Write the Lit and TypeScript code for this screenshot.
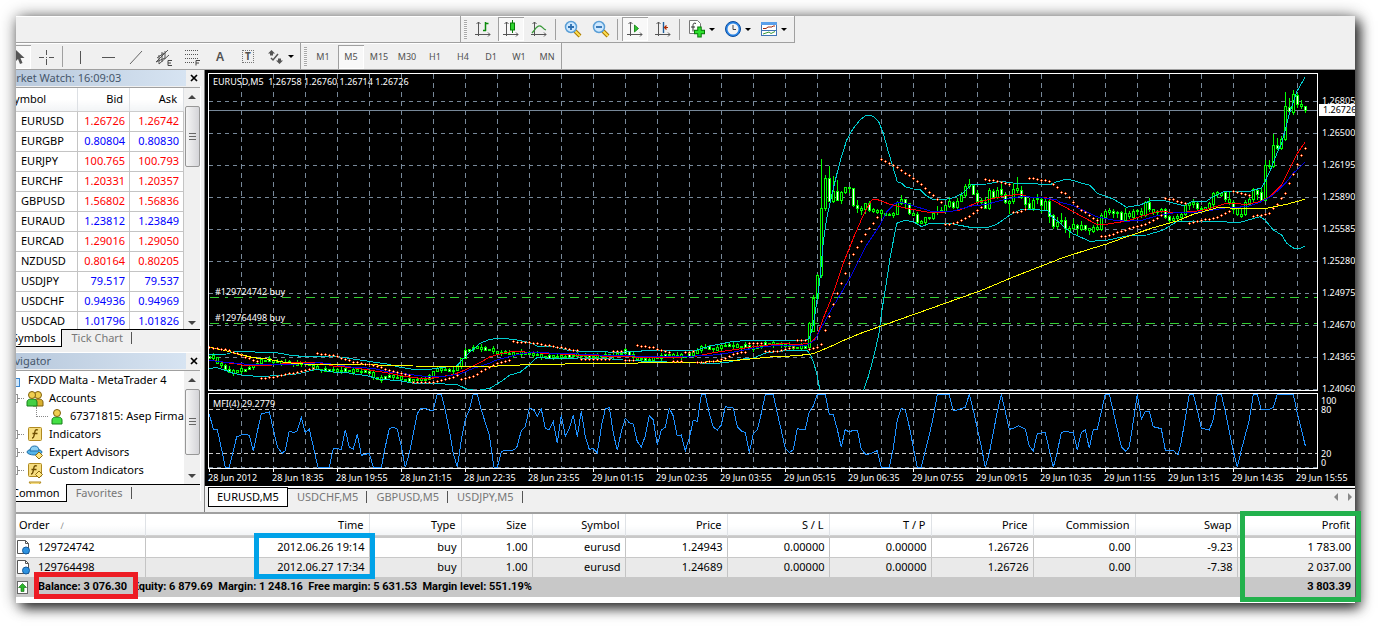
import { LitElement, html, svg, css } from "lit";
import { customElement } from "lit/decorators.js";
import { classMap } from "lit/directives/class-map.js";

type Pt = [number, number];

/* Curves are sampled three units to the pixel, in tiles with their own origin. */
const tile = (ox: number, oy: number, data: string): Pt[] =>
  data
    .trim()
    .split(/\s+/)
    .map((p) => {
      const [x, y] = p.split(",").map(Number);
      return [ox + x / 3, oy + y / 3] as Pt;
    });

const line = (...parts: Pt[][]): string =>
  parts.flat().map(([x, y]) => `${x.toFixed(1)},${y.toFixed(1)}`).join(" ");

const A = (d: string) => tile(200, 330, d);
const B = (d: string) => tile(580, 330, d);
const C = (d: string) => tile(960, 330, d);
const D = (d: string) => tile(780, 65, d);
const E = (d: string) => tile(1060, 65, d);

const UPPER = line(
  A("28,73 80,72 100,66 124,64 180,67 230,68 280,77 330,80 420,81 460,87 520,96 560,102 600,112 640,118 690,118 730,112 770,108 800,75 820,58 840,40 870,28 900,25 940,28 990,38 1010,48 1060,50 1100,60 1138,64"),
  B("0,64 120,67 200,62 330,62 350,60 390,48 450,36 500,31 590,33"),
  D("0,827 70,828 88,820 100,780 112,700 120,640 130,530 140,460 160,370 180,290 200,225 220,190 240,165 256,153 268,151 280,154 296,170 310,205 325,260 340,310 352,350 365,355 376,365 400,372 420,373 440,393 455,402 490,404 520,398 545,387 575,358 620,357 660,349 700,354 740,355 810,359 830,350"),
  E("0,348 16,343 40,346 70,356 90,361 112,385 160,402 200,427 240,420 270,408 310,406 370,422 400,408 440,408 460,395 490,380 570,379 605,368 615,350 630,318 655,255 665,235 690,140 710,80 735,37"),
);
const LOWER_1 = line(
  A("28,115 50,113 80,122 100,130 130,136 190,140 230,136 280,134 320,125 345,118 400,126 440,128 500,137 540,148 600,152 640,160 700,161 770,163 800,177 830,182 870,175 910,150 930,135 960,127 985,107 1010,83 1060,85 1138,84"),
  B("0,84 60,84 130,90 220,95 300,97 350,98 380,101 440,98 480,88 520,84 560,68 640,60 680,60 690,72 700,95 710,130 720,182"),
);
const LOWER_2 = line(
  D("250,977 265,935 280,880 296,810 305,740 318,660 330,580 350,475 375,466 400,470 425,485 450,475 520,477 570,487 625,487 650,478 690,450 720,435 760,433 805,438 820,460"),
  E("0,473 16,490 40,507 90,529 140,526 200,513 260,510 310,495 350,470 400,468 460,470 540,472 600,455 615,465 640,495 665,510 680,535 705,552 720,550 735,544"),
);
const FAST = line(
  A("28,90 60,95 110,102 140,108 200,107 260,100 300,96 350,97 400,108 460,113 520,122 560,128 620,140 680,147 710,142 760,134 800,118 840,98 870,80 900,72 940,63 1000,68 1080,72 1138,76"),
  B("0,76 130,80 230,83 340,80 400,68 470,58 550,46 598,43"),
  D("0,836 60,838 90,835 110,815 130,760 150,710 170,655 190,595 220,520 250,450 275,405 290,403 330,418 380,430 440,441 480,443 540,435 590,413 640,400 680,392 720,388 750,396 800,398 830,412"),
  E("0,418 40,440 80,462 110,478 145,477 200,468 250,452 300,438 340,443 400,440 440,433 500,415 560,418 600,410 630,395 665,360 690,310 710,268 735,232"),
);
const SLOW = line(
  A("28,91 60,95 110,100 160,105 200,103 280,103 360,98 400,103 460,112 520,115 560,125 620,132 680,140 740,138 780,132 820,115 860,103 890,90 920,82 960,72 1000,66 1060,70 1138,72"),
  B("0,73 80,76 200,79 330,79 400,75 450,68 520,55 598,45"),
  D("0,840 80,840 105,825 120,795 150,740 180,690 220,620 260,540 300,480 320,440 345,415 360,412 400,422 450,438 520,438 570,424 620,418 680,402 720,395 780,397 830,405"),
  E("0,412 40,422 110,455 160,465 200,469 250,465 290,452 340,444 400,443 460,435 500,428 560,425 600,412 640,390 680,350 700,325 735,292"),
);
const TREND = line(
  A("28,52 60,58 100,68 160,83 200,87 260,98 310,102 400,103 500,104 640,108 800,109 860,110 920,106 1000,104 1080,103 1130,100"),
  B("0,100 150,100 230,97 340,98 480,90 560,82 598,79"),
  D("0,875 60,871 100,866 150,845 200,822 250,802 310,781 360,763 420,742 500,713 600,678 700,636 800,597 830,586"),
  E("0,581 80,555 140,537 200,515 280,488 350,468 400,448 480,426 520,430 620,430 680,418 735,403"),
);
const MFI = line(
  A("28,252 40,298 52,298 60,335 76,412 88,412 98,370 110,320 130,313 148,316 160,363 172,305 184,252 208,246 218,290 232,350 246,370 256,362 268,303 280,308 292,302 304,262 316,308 328,298 340,350 354,412 388,412 400,355 424,358 436,300 448,352 460,357 472,312 484,376 508,370 520,412 544,412 556,350 568,296 580,292 592,298 604,350 616,412 628,370 652,250 664,235 676,235 688,240 700,240 712,193 724,193 736,240 748,300 760,370 772,412 784,330 796,268 808,240 820,193 832,193 844,240 868,315 882,412 892,412 904,365 916,361 940,360 950,353 964,302 976,290 988,235 1000,238 1012,258 1024,237 1036,296 1048,298 1060,275 1072,340 1084,255 1096,318 1108,296 1120,255 1132,320 1144,243"),
  B("16,320 28,358 40,356 52,368 66,280 76,237 88,232 100,310 112,360 124,305 136,265 148,278 160,282 172,335 184,350 196,318 208,258 220,270 232,345 244,300 256,292 268,235 280,258 292,318 304,315 316,362 328,325 340,270 352,275 364,194 376,194 388,250 400,292 412,300 424,285 436,230 460,234 472,290 484,303 496,307 508,368 520,312 532,300 544,250 556,194 580,194 592,250 604,302 616,355 628,367 640,360 652,295 664,299 676,298 688,245 700,228 712,194 736,194 748,254 760,254 772,298 784,352 796,298 808,307 820,300 832,300 844,357 856,372 868,372 892,362 904,412 928,412 940,355 952,270 964,235 976,240 988,290 1012,412 1024,412 1048,315 1060,260 1072,194 1108,194 1120,243 1144,236 1156,232"),
  C("28,193 40,240 64,350 76,412 88,370 112,245 124,193 136,245 148,298 160,295 175,287 196,297 208,348 220,363 232,310 256,308 268,360 280,412 292,365 304,308 316,304 340,308 352,360 364,307 376,300 388,355 400,298 412,298 424,245 436,193 448,193 460,245 484,350 498,364 508,350 520,275 532,193 544,267 556,244 568,244 580,290 604,296 616,360 640,360 654,375 664,335 688,193 700,193 712,240 724,295 748,300 760,268 772,193 784,193 796,245 820,365 832,412 844,360 868,270 880,193 892,193 904,240 928,238 940,232 952,193 1000,193 1012,250 1036,347"),
);

/* Runs of parabolic SAR marks, one mark per bar between the knots. */
const SAR: Pt[][] = [
  A("28,52 88,60 160,90 172,92"), A("184,145 220,140 340,115"),
  A("352,70 400,76 460,95 520,105 560,118 630,135"), A("640,157 700,155 750,143 772,136"),
  A("784,146 820,138 850,120 890,100 930,88"), A("940,34 1000,38 1050,46 1136,62"),
  B("4,88 90,86"), B("100,62 124,62"), B("136,90 164,91"), B("172,46 220,52 256,64 268,66"),
  B("280,94 304,94"), B("316,65 340,64"), B("352,97 390,94 430,85 460,72 500,64"),
  B("508,38 544,38"), B("556,64 580,64 640,52"), D("52,826 76,826"),
  D("88,853 100,850 112,847 124,835 136,790 148,750 172,680 196,620 220,565 256,505 292,455"),
  D("304,283 340,300 400,340 424,357 448,382 484,412"), D("496,478 520,474 556,460 592,433 604,425"),
  D("616,343 640,346 688,358"), D("700,442 712,441 736,433"),
  D("748,338 808,348 832,366"), E("4,380 16,385 40,412 64,435 112,466"),
  E("124,514 136,514 200,492 268,472 292,458 304,450"), E("316,400 340,403 376,415"),
  E("388,474 436,463 460,460 508,438"), E("520,379 568,391"),
  E("580,454 628,443 652,415 676,382 688,352 712,295 724,268 736,247"),
];

const valueAt = (pts: Pt[], x: number): number => {
  for (let i = 1; i < pts.length; i++) {
    if (x <= pts[i][0]) {
      const [x0, y0] = pts[i - 1];
      const [x1, y1] = pts[i];
      return y0 + ((y1 - y0) * (x - x0)) / (x1 - x0);
    }
  }
  return pts[pts.length - 1][1];
};

/* Quiet session: bars follow the closing path. */
const QUIET: Pt[] = [
  ...A("28,80 40,75 52,98 64,102 76,112 88,125 100,130 112,118 124,120 136,122 148,112 172,103 196,88 208,90 232,93 256,98 292,99 328,100 340,110 352,118 400,118 460,120 508,125 520,135 532,148 556,145 568,135 592,142 616,150 640,148 688,147 700,125 712,117 736,118 760,122 772,118 784,95 796,65 820,55 832,48 844,55 868,58 892,66 916,64 928,75 940,70 964,68 1000,72 1036,78 1108,78 1138,74"),
  ...B("4,75 30,80 60,75 90,76 130,70 145,60 155,80 200,88 240,82 270,72 310,80 330,75 350,65 370,50 390,52 410,60 430,45 500,48 520,55 560,40 600,42 640,50 684,50"),
];

/* Active session, first bar at x = 809: "high top bottom low", a trailing "-" marks a falling bar. */
const ACTIVE_1 = `770 775 847 850|690 700 798 798|628 631 700 700|282 430 631 635|330 340 430 435|302 340 408 408 -|332 379 408 410|345 379 404 406 -|377 381 404 413|366 367 381 385|366 367 370 381|368 370 420 422 -|406 421 430 440 -|424 430 434 446|413 415 432 445|407 414 436 438 -|430 433 437 440|432 435 441 443|432 436 443 456|443 444 449 450|444 446 450 450|440 445 449 455|408 412 446 446|390 402 413 416|402 403 415 428 -|414 415 445 448 -|442 444 449 449|440 446 470 475 -|466 468 474 474|455 457 472 480|456 457 460 462|440 443 460 462|424 437 440 446|425 436 440 440|420 421 437 440|397 408 422 426|408 410 426 428 -|400 407 426 430|380 390 407 407|358 363 390 395|342 358 363 370|358 359 386 388 -|375 385 408 410 -|400 405 412 415|395 412 428 430 -|370 376 430 432|372 378 395 400 -|366 374 397 400|355 373 387 390 -|382 386 412 414 -|405 408 413 443|355 373 408 415|337 370 375 380|362 374 395 400 -|390 394 416 430 -|400 413 430 432 -|400 404 430 434|388 400 403 415|395 401 421 440 -|400 407 434 436|406 408 452 470 -|448 450 482 490 -|455 472 482 488|443 465 468 475`;
const ACTIVE_2 = `455 465 490 500 -|484 488 495 515|462 478 490 492|476 479 490 506 -|467 481 491 494|479 481 493 494 -|488 490 495 508|480 487 497 500|460 487 493 495|445 450 493 495|435 439 455 458|430 436 440 446|433 437 443 456 -|438 440 445 457|438 440 465 468 -|430 445 465 467|438 444 453 460|433 437 455 462|432 436 439 447|428 437 447 455|408 412 450 452|400 410 433 438 -|432 433 441 446|435 437 442 446|428 433 437 440|428 433 457 460 -|450 453 464 475 -|452 458 465 466|448 453 460 464|443 446 455 465|416 420 447 450|410 415 420 432|402 410 417 425|410 414 430 432 -|424 428 432 436|425 427 432 434|412 415 430 433|380 384 416 422|378 382 388 395|380 384 389 392|379 380 403 408 -|380 403 412 416|405 412 433 445 -|428 430 447 450|430 446 452 455|405 412 448 450|398 403 417 420|370 373 403 407|369 376 386 402 -|370 380 404 408 -|285 300 404 405|286 299 303 310|208 239 302 305|220 239 250 252 -|214 222 250 252|82 124 222 224|100 125 137 145 -|75 88 140 146|85 89 118 125 -|105 117 124 128|122 124 136 140 -`;

interface Bar { x: number; h: number; t: number; b: number; l: number; down: boolean }

const parseBars = (x0: number, src: string): Bar[] =>
  src.split("|").map((s, i) => {
    const [h, t, b, l] = s.trim().split(" ").map(Number);
    const y = (v: number) => Math.round(65 + v / 3);
    return { x: x0 + i * 4, h: y(h), t: y(t), b: y(b), l: y(l), down: s.includes("-") };
  });

const quietBars = (): Bar[] => {
  const out: Bar[] = [];
  for (let i = 0; i < 150; i++) {
    const x = 209 + i * 4;
    const a = valueAt(QUIET, x - 2);
    const c = valueAt(QUIET, x + 2);
    const n = (i * 37) % 7;
    const t = Math.round(Math.min(a, c) - (n % 3) * 0.7);
    const b = Math.max(Math.round(Math.max(a, c)), t + 1 + (n % 3));
    out.push({ x, t, b, h: t - (n % 4), l: b + ((i * 13) % 5 > 2 ? 2 : 0), down: (i * 29) % 5 < 2 });
  }
  return out;
};

const BARS = [...quietBars(), ...parseBars(809, ACTIVE_1), ...parseBars(1065, ACTIVE_2)];

const sarMarks = (run: Pt[]) => {
  const out: Pt[] = [];
  const end = run[run.length - 1][0];
  for (let x = Math.round((run[0][0] - 209) / 4) * 4 + 209; x <= end + 1; x += 4) {
    out.push([x, Math.round(valueAt(run, x))]);
  }
  return out;
};

const COLS = Array.from({ length: 34 }, (_, i) => 241 + i * 32);
const ROWS = Array.from({ length: 10 }, (_, i) => 101 + i * 32);

const QUOTES: [string, string, string, boolean][] = [
  ["EURUSD", "1.26726", "1.26742", false],
  ["EURGBP", "0.80804", "0.80830", true],
  ["EURJPY", "100.765", "100.793", false],
  ["EURCHF", "1.20331", "1.20357", false],
  ["GBPUSD", "1.56802", "1.56836", false],
  ["EURAUD", "1.23812", "1.23849", true],
  ["EURCAD", "1.29016", "1.29050", false],
  ["NZDUSD", "0.80164", "0.80205", false],
  ["USDJPY", "79.517", "79.537", true],
  ["USDCHF", "0.94936", "0.94969", true],
  ["USDCAD", "1.01796", "1.01826", true],
];

const DATES = ["28 Jun 2012", "28 Jun 18:35", "28 Jun 19:55", "28 Jun 21:15", "28 Jun 22:35", "28 Jun 23:55",
  "29 Jun 01:15", "29 Jun 02:35", "29 Jun 03:55", "29 Jun 05:15", "29 Jun 06:35", "29 Jun 07:55", "29 Jun 09:15",
  "29 Jun 10:35", "29 Jun 11:55", "29 Jun 13:15", "29 Jun 14:35", "29 Jun 15:55"];
const PRICES = ["1.26805", "1.26500", "1.26195", "1.25890", "1.25585", "1.25280", "1.24975", "1.24670", "1.24365", "1.24060"];

const HEAD = ["Order", "Time", "Type", "Size", "Symbol", "Price", "S / L", "T / P", "Price", "Commission", "Swap", "Profit"];
const ORDERS = [
  ["129724742", "2012.06.26 19:14", "buy", "1.00", "eurusd", "1.24943", "0.00000", "0.00000", "1.26726", "0.00", "-9.23", "1 783.00"],
  ["129764498", "2012.06.27 17:34", "buy", "1.00", "eurusd", "1.24689", "0.00000", "0.00000", "1.26726", "0.00", "-7.38", "2 037.00"],
];

/* 20 x 20 toolbar glyphs */
const axes = svg`<path d="M5.5 3v14M2 15.5h15M3.5 5l2-2 2 2M15 13.5l2 2-2 2" fill="none" stroke="#555"/>`;
const glyphs: Record<string, unknown> = {
  bars: svg`${axes}<path d="M12.500 3v9M12.500 4.500h3M10 11.500h3" fill="none" stroke="#0a8a0a" stroke-width="1.500"/>`,
  candles: svg`${axes}<path d="M11.500 1v13" stroke="#0a7a0a"/><rect x="9.500" y="4" width="4" height="7" fill="#2fd52f" stroke="#0a7a0a"/>`,
  curve: svg`${axes}<path d="M3 14C6 11 8 6 11 7c2 0 3 3 6 4" fill="none" stroke="#3a9a3a" stroke-width="1.300"/>`,
  zoomIn: svg`<path d="M12 12l5 5" stroke="#a87800" stroke-width="4"/><path d="M12 12l5 5" stroke="#ffdf50" stroke-width="2"/><circle cx="8" cy="8" r="5.500" fill="#cfe9ff" stroke="#5b9fd6" stroke-width="1.500"/><path d="M5 8h6M8 5v6" stroke="#2c6fb0" stroke-width="1.800"/>`,
  zoomOut: svg`<path d="M12 12l5 5" stroke="#a87800" stroke-width="4"/><path d="M12 12l5 5" stroke="#ffdf50" stroke-width="2"/><circle cx="8" cy="8" r="5.500" fill="#cfe9ff" stroke="#5b9fd6" stroke-width="1.500"/><path d="M5 8h6" stroke="#2c6fb0" stroke-width="1.800"/>`,
  scroll: svg`${axes}<path d="M9.500 6v7l4-3.500z" fill="#2fc52f" stroke="#0a7a0a" stroke-width=".8"/>`,
  shift: svg`${axes}<path d="M10.500 3v11" stroke="#1d5f9c" stroke-width="1.400"/><path d="M15 8.500h-4M13.500 6.500l-2 2 2 2" fill="none" stroke="#b02a00" stroke-width="1.200"/>`,
  plus: svg`<path d="M2.500 1.500h8l3 3v10h-11z" fill="#fff" stroke="#777"/><path d="M9 4.500c-2-1-3 0-3 2v6M4 8h4" fill="none" stroke="#333"/><path d="M12.500 7.500v11M7 13h11" stroke="#087808" stroke-width="4.500"/><path d="M12.500 8.500v9M8 13h9" stroke="#2ee02e" stroke-width="2.500"/>`,
  clock: svg`<circle cx="10" cy="10" r="7.500" fill="#2a86e8" stroke="#0c4c9c"/><circle cx="10" cy="10" r="5.500" fill="#f4f4f4"/><path d="M10 6v4.500h3" fill="none" stroke="#444"/>`,
  template: svg`<rect x="2.500" y="3.500" width="15" height="13" fill="#fff" stroke="#3f74b5"/><path d="M2 4.500h16" stroke="#5aa0ea" stroke-width="3"/><path d="M4 9.500h3l2-1.500h4l1-1h2" fill="none" stroke="#a02c10"/><path d="M3 11.500h14" stroke="#3f74b5"/><path d="M4 15l3-1 3-1 2 1.500 4-2" fill="none" stroke="#3a9a3a"/>`,
  cursor: svg`<path d="M7 2v13l3-3 2 5 2.500-1-2-5h4z" fill="#555"/>`,
  cross: svg`<path d="M10.500 3v5M10.500 12v6M3 10.500h5M13 10.500h5M10 10.500h1" stroke="#555"/>`,
  vline: svg`<path d="M10.500 4v13" stroke="#555"/>`,
  hline: svg`<path d="M4 10.500h13" stroke="#555"/>`,
  trend: svg`<path d="M4 17L16 4" stroke="#666"/>`,
  channel: svg`<path d="M2 15L14 3M5 17L15 8M3 11l7-5M2 15l9-4M5 8v9M8 5v10M11 4v8" fill="none" stroke="#555"/><path d="M18 13.500h-4v5h4M14 16h3" fill="none" stroke="#444"/>`,
  fibo: svg`<path d="M3 3.500h14M3 7.500h14M3 11.500h14M3 15.500h9" stroke="#555" stroke-dasharray="1 1"/><path d="M18 13.500h-4v5M14 16h3" fill="none" stroke="#444"/>`,
  arrows: svg`<path d="M2 6.500L5.500 3 9 6.500H7v2H4v-2zM10 13.500h2v-2h3v2h2L13.500 17z" fill="#555"/><path d="M5 11l2 2 5-6" fill="none" stroke="#555" stroke-width="1.500"/>`,
};
const glyph = (name: string) => html`<svg class="glyph" viewBox="0 0 20 20" aria-hidden="true">${glyphs[name]}</svg>`;

const person = (x: number, body: string, edge: string) => svg`
  <path d="M${x} 16v-4q0-3 5-3t5 3v4z" fill="${body}" stroke="${edge}"/>
  <circle cx="${x + 5}" cy="5" r="3.500" fill="#f0cf50" stroke="#80600c"/>`;
const treeIcons: Record<string, unknown> = {
  server: svg`<rect x="1.500" y="6.500" width="13" height="8" fill="#cfe6fb" stroke="#3a86cf"/><path d="M10 2v12" stroke="#3a86cf" stroke-width="2"/>`,
  people: svg`${person(7, "#d8b030", "#80600c")}${person(1, "#44d044", "#17801a")}`,
  user: svg`${person(2, "#44e044", "#17801a")}`,
  fn: svg`<rect x="2.500" y="1.500" width="13" height="13" rx="1" fill="#f6dd80" stroke="#b08a20"/><path d="M12 4c-3-1-3 1-3.500 3.500S8 12 6 12M6.500 7.500h5" fill="none" stroke="#6c4c00" stroke-width="1.300"/>`,
  fnx: svg`<rect x="2.500" y="1.500" width="13" height="13" rx="1" fill="#f6dd80" stroke="#b08a20"/><path d="M11 4c-3-1-3 1-3.500 3.500S7 12 5 12M5.500 7.500h5" fill="none" stroke="#6c4c00" stroke-width="1.300"/><path d="M13 9l3.500 3.500L13 16l-3.500-3.500z" fill="#ffe680" stroke="#8c6a10"/>`,
  hat: svg`<ellipse cx="8.500" cy="8" rx="7.500" ry="3" fill="#55b4e8" stroke="#1e6fa8"/><path d="M4 7q0-5 4.500-5T13 7z" fill="#8bd0f4" stroke="#1e6fa8"/><path d="M13 8l3.500 3.500L13 15l-3.500-3.500z" fill="#ffe680" stroke="#8c6a10"/>`,
  scroll: svg`<path d="M3 2h12l-3 4H6z" fill="#f6dd80" stroke="#b08a20"/>`,
};
const treeIcon = (name: string) => html`<svg class="tree-icon" viewBox="0 0 18 17" aria-hidden="true">${treeIcons[name]}</svg>`;

const TREE: [number, string, string][] = [
  [0, "server", "FXDD Malta - MetaTrader 4"],
  [1, "people", "Accounts"],
  [2, "user", "67371815: Asep Firman"],
  [1, "fn", "Indicators"],
  [1, "hat", "Expert Advisors"],
  [1, "fnx", "Custom Indicators"],
  [1, "scroll", "Scripts"],
];

@customElement("price-chart")
export class PriceChart extends LitElement {
  static styles = css`
    :host { display: block; background: #000; color: #fff; padding: 3px 0 0 3px; font: 9px/12px "Noto Sans", "Open Sans", sans-serif; min-width: 0; overflow: hidden; white-space: nowrap; }
    .panes { display: grid; grid-template-columns: minmax(0, 1fr) 37px; row-gap: 1px; }
    .pane { position: relative; }
    .plot { display: block; width: 100%; shape-rendering: crispEdges; }
    .tall { height: 319px; }
    .short { height: 76px; }
    .caption { position: absolute; left: 5px; top: 3px; white-space: pre; }
    .short + .caption { top: 5px; }
    .trade { position: absolute; left: 7px; }
    .first { top: 213px; }
    .second { top: 239px; }
    .scale { position: relative; padding-top: 12px; }
    .price { height: 32px; line-height: 32px; display: flex; align-items: center; gap: 4px; }
    .price::before, .dates span::before { content: ""; background: #fff; }
    .price::before { width: 2px; height: 1px; }
    .now { position: absolute; left: 1px; right: 0; top: 31px; height: 12px; padding-left: 4px; background: #fff; color: #000; }
    .scale.main { height: 319px; box-sizing: border-box; overflow: hidden; }
    .level { display: flex; flex-direction: column; line-height: 9px; padding: 3px 0 0 3px; }
    .level i { flex: 0 0 35px; }
    .dates { display: grid; grid-template-columns: repeat(17, minmax(0, 1fr)) 59px; height: 17px; }
    .dates span { line-height: 17px; position: relative; }
    .dates span::before { position: absolute; left: 1px; top: 0; width: 1px; height: 3px; }
  `;

  private grid(rows: number[], top: number, bottom: number) {
    return svg`
      ${COLS.map((x) => svg`<path d="M${x + 0.5} ${top}V${bottom}" stroke="#778899" stroke-dasharray="5 4"/>`)}
      ${rows.map((y) => svg`<path d="M209 ${y + 0.5}H1317" stroke="#778899" stroke-dasharray="4 4"/>`)}`;
  }

  render() {
    return html`
      <div class="panes">
        <div class="pane">
          <svg class="plot tall" viewBox="208 73 1110 319" preserveAspectRatio="none" role="img" aria-label="EURUSD five minute chart">
            ${this.grid(ROWS, 74, 391)}
            <path d="M209 110.500H1317" stroke="#778899"/>
            <path d="M210 297.500H1317M210 323.500H1317" stroke="#32cd32" stroke-dasharray="9 6 3 6"/>
            ${BARS.map((b) => svg`<path d="M${b.x + 0.5} ${b.h}V${Math.max(b.l, b.b) + 1}" stroke="#0f0"/>
              <rect x="${b.x - 0.5}" y="${b.t + 0.5}" width="2" height="${Math.max(b.b - b.t, 1)}" fill="${b.down ? "#fff" : "#000"}" stroke="#0f0"/>`)}
            <polyline points=${UPPER} fill="none" stroke="#00ced1"/>
            <polyline points=${LOWER_1} fill="none" stroke="#00ced1"/>
            <polyline points=${LOWER_2} fill="none" stroke="#00ced1"/>
            <polyline points=${FAST} fill="none" stroke="#f00"/>
            <polyline points=${SLOW} fill="none" stroke="#0000e0"/>
            <polyline points=${TREND} fill="none" stroke="#ff0"/>
            ${SAR.map((run) => sarMarks(run).map(([x, y]) => svg`<path d="M${x - 1} ${y + 0.5}h3M${x + 0.5} ${y - 1}v3" stroke="#ff4500"/><rect x="${x}" y="${y}" width="1" height="1" fill="#fff"/>`))}
            <rect x="208.500" y="73.500" width="1109" height="317" fill="none" stroke="#fff"/>
          </svg>
          <span class="caption">EURUSD,M5  1.26758 1.26760 1.26714 1.26726</span>
          <span class="trade first">#129724742 buy</span>
          <span class="trade second">#129764498 buy</span>
        </div>
        <div class="scale main">
          ${PRICES.map((p) => html`<div class="price">${p}</div>`)}
          <div class="now">1.26726</div>
        </div>
        <div class="pane">
          <svg class="plot short" viewBox="208 393 1110 76" preserveAspectRatio="none" role="img" aria-label="Money flow index">
            ${this.grid([467], 394, 468)}
            <path d="M209 409.500H1317M209 453.500H1317" stroke="#c8c8c8" stroke-dasharray="4 3"/>
            <polyline points=${MFI} fill="none" stroke="#1e90ff"/>
            <rect x="208.500" y="393.500" width="1109" height="75" fill="none" stroke="#fff"/>
          </svg>
          <span class="caption">MFI(4) 29.2779</span>
        </div>
        <div class="level"><span>100</span><span>80</span><i></i><span>20</span><span>0</span></div>
      </div>
      <div class="dates">${DATES.map((d) => html`<span>${d}</span>`)}</div>
    `;
  }
}

@customElement("app-root")
export class AppRoot extends LitElement {
  static styles = css`
    :host { display: block; background: #fff; padding: 16px 24px 24px 16px; font: 11px/16px "Noto Sans", "Open Sans", sans-serif; color: #000; overflow: hidden; }
    * { box-sizing: border-box; }
    button { font: inherit; color: inherit; border: 0; background: none; padding: 0; margin: 0; }
    table { border-collapse: collapse; table-layout: fixed; width: 100%; }
    th { font-weight: 400; }
    .window { position: relative; box-shadow: 5px 5px 12px rgba(0, 0, 0, .8), 0 0 16px rgba(0, 0, 0, .4); }
    .clip { overflow: hidden; background: #f0f0f0; }

    .bar { display: flex; height: 27px; }
    .group { display: flex; align-items: center; border-bottom: 1px solid #a0a0a0; border-right: 1px solid #a0a0a0; box-shadow: inset 0 1px #fff; height: 27px; }
    .group.blank { flex: 0 0 445px; }
    .group.icons { padding-right: 3px; }
    .bar.lower { box-shadow: inset 0 -1px #a0a0a0; }
    .lower .group { border-bottom: 0; }
    .lower .drawing { margin-left: -12px; padding-right: 2px; }
    .grip { width: 3px; height: 19px; margin: 0 2px 0 3px; background: repeating-linear-gradient(#a8a8a8 0 1px, #f8f8f8 1px 2px); }
    .tool { width: 28px; height: 24px; display: flex; align-items: center; justify-content: center; color: #505050; font-size: 10px; }
    .tool.drop { width: 36px; gap: 2px; }
    .tool.drop::after { content: ""; border: 3px solid transparent; border-top-color: #000; border-bottom: 0; }
    .tool.on { background: #f8f8f8; box-shadow: inset 1px 1px #a0a0a0, inset -1px -1px #fff; width: 26px; margin: 0 1px; }
    .tool.letter { font-size: 12px; font-weight: 600; }
    .boxed { border: 1px dotted #777; line-height: 11px; padding: 0 2px; font-weight: 700; }
    .rule { width: 1px; height: 21px; margin: 0 3px 0 2px; background: #a0a0a0; }
    .glyph { width: 20px; height: 20px; display: block; flex: none; }
    .tool.period { font-size: 9px; }

    .work { display: grid; grid-template-columns: 207px minmax(0, 1fr); margin-left: -18px; }
    .dock { padding-right: 3px; border-right: 1px solid #808080; }
    .panel { border-right: 1px solid #fff; }
    .title { display: flex; justify-content: space-between; align-items: center; height: 16px; margin: 0 0 1px; padding-left: 2px; font-weight: 400; font-size: 11px; color: #46566a; background: linear-gradient(90deg, #b5c6da, #d7e4f2); border-right: 12px solid #f0f0f0; }
    .close { width: 16px; margin-right: -14px; height: 16px; display: grid; place-items: center; background: #f0f0f0; }
    .content { display: grid; grid-template-columns: minmax(0, 1fr) 16px; background: #fff; border-top: 1px solid #a0a0a0; overflow: hidden; }
    .content.quotes { height: 242px; }
    .content.tree-box { height: 114px; }
    .quotes table { height: 243px; }
    .quotes th { height: 23px; padding: 0 6px 0 10px; text-align: right; background: linear-gradient(#fff 50%, #f2f4f6); border-right: 1px solid #dde0e4; border-bottom: 1px solid #ccc; }
    .quotes th:first-child { text-align: left; }
    .quotes td { height: 20px; padding: 0 4px 0 0; text-align: right; border-right: 1px solid #c4c4c4; border-bottom: 1px solid #c4c4c4; }
    .quotes td:first-child { padding-left: 23px; text-align: left; color: #000; }
    .num { width: 52px; }
    .num.last { width: 54px; }
    .up td { color: #00f; }
    .down td { color: #f00; }
    .scrollbar { display: grid; grid-template-rows: 18px 61px 1fr 17px; background: #f0f0f0; place-items: center; }
    .tree-box .scrollbar { grid-template-rows: 18px 66px 1fr 16px; }
    .thumb { width: 15px; height: 100%; border: 1px solid #979797; border-radius: 2px; background: linear-gradient(90deg, #f5f5f5, #d4d4d8); display: grid; place-items: center; }
    .thumb::before { content: ""; width: 7px; height: 8px; background: repeating-linear-gradient(#666 0 1px, transparent 1px 3px); }
    .arrow-up, .arrow-down { border: 4px solid transparent; }
    .arrow-up { border-top: 0; border-bottom-color: #444; }
    .arrow-down { border-bottom: 0; border-top-color: #444; grid-row: 4; }
    .tabs { display: flex; height: 17px; color: #777; }
    .line { flex: 1; border-top: 1px solid #000; display: flex; align-items: center; }
    .tab.active { background: #fff; color: #000; border: solid #000; border-width: 0 1px 1px 0; padding: 0 6px 0 14px; height: 18px; }
    .line .tab { padding: 0 8px 0 9px; }
    .bartick { width: 1px; height: 12px; background: #555; }
    .gap { height: 7px; border-bottom: 1px solid #fff; }

    .tree { list-style: none; margin: 0; padding: 0; overflow: hidden; white-space: nowrap; }
    .tree li { display: flex; align-items: center; height: 18px; }
    .tree-icon { width: 18px; height: 17px; flex: none; }
    .lv0 { padding-left: 7px; gap: 5px; }
    .lv1 { padding-left: 11px; gap: 5px; }
    .lv2 { padding-left: 38px; gap: 2px; }
    .box { width: 9px; height: 9px; border: 1px solid #919191; background: #fff; margin-right: -5px; flex: none; }
    .dots { border-bottom: 1px dotted #888; width: 6px; margin-right: -3px; flex: none; }
    .lv2 .dots { width: 12px; height: 10px; align-self: flex-start; border-left: 1px dotted #888; margin-right: 0; }

    .sheets { display: flex; height: 26px; color: #777; border-top: 1px solid #fff; padding-left: 3px; }
    .sheets .tab.active { height: 20px; padding: 0 8px; border-width: 1px; line-height: 18px; }
    .sheets .line { margin-top: 1px; height: 17px; }
    .sheets .line .tab { padding: 0 8px 0 9px; }
    .nav { margin-left: auto; display: flex; gap: 10px; padding-right: 3px; }
    .nav i { border: 4px solid transparent; }
    .nav .prev { border-left: 0; border-right-color: #888; }
    .nav .next { border-right: 0; border-left-color: #888; }

    .terminal { background: #fff; border-top: 2px solid #a0a0a0; padding-bottom: 6px; }
    .orders th { height: 23px; padding: 0 5px; text-align: right; background: linear-gradient(#fff 50%, #f1f3f5); border-right: 1px solid #dfe2e6; box-shadow: inset 0 -1px #d0d0d0; }
    .orders td { height: 20px; padding: 0 4px; text-align: right; border-right: 1px solid #c4c4c4; border-bottom: 1px solid #c8c8c8; white-space: pre; }
    .orders tbody tr:first-child td { border-top: 2px solid #c8c8c8; }
    .orders tbody tr:nth-child(2) td { background: #eaeaea; }
    .orders th:first-child, .orders td:first-child { text-align: left; }
    .orders th:first-child { padding-left: 3px; }
    .orders td:first-child { padding-left: 0; }
    .orders tr > :last-child { border-right: 0; }
    .orders tfoot td { background: #c8c8c8; border: 0; font: 700 11px/16px Roboto, "Noto Sans", sans-serif; }
    .cell { display: flex; align-items: center; gap: 7px; }
    .cell svg { width: 15px; height: 16px; flex: none; }
    .sort { color: #888; padding-left: 11px; font-size: 9px; }
    .w-order { width: 129px; } .w-type { width: 92px; } .w-size { width: 71px; } .w-symbol { width: 93px; }
    .w-num { width: 102px; } .w-profit { width: 118px; }

    .mark { position: absolute; border: 5px solid; pointer-events: none; }
    .mark.red { border-color: #ed1c24; left: 18px; bottom: 4px; width: 104px; height: 27px; }
    .mark.blue { border-color: #00a2e8; right: 980px; bottom: 24px; width: 121px; height: 46px; }
    .mark.green { border-color: #22b14c; right: -6px; bottom: 1px; width: 121px; height: 91px; }
  `;

  private tool(name: string, label: string, opts: { on?: boolean; drop?: boolean } = {}) {
    return html`<button class=${classMap({ tool: true, on: !!opts.on, drop: !!opts.drop })} aria-label=${label}>${glyph(name)}</button>`;
  }

  private scrollbar() {
    return html`<div class="scrollbar" aria-hidden="true"><i class="arrow-up"></i><div class="thumb"></div><i class="arrow-down"></i></div>`;
  }

  private title(text: string) {
    return html`<h2 class="title">${text}<button class="close" aria-label="Close">
      <svg width="8" height="8" viewBox="0 0 8 8"><path d="M1 1l6 6M7 1L1 7" stroke="#000" stroke-width="1.700"/></svg></button></h2>`;
  }

  private doc() {
    return html`<svg viewBox="0 0 15 16" aria-hidden="true"><path d="M1.500 1.500h8l3 3v10h-11z" fill="#fff" stroke="#555"/><path d="M9.500 1.500v3h3" fill="none" stroke="#555"/><circle cx="10" cy="11.500" r="3.500" fill="#2d92e0" stroke="#135a9c"/></svg>`;
  }

  render() {
    return html`
      <main class="window">
        <div class="clip">
          <div class="bar">
            <div class="group blank"></div>
            <div class="group icons">
              <span class="grip"></span>
              ${this.tool("bars", "Bar chart")}${this.tool("candles", "Candlesticks", { on: true })}${this.tool("curve", "Line chart")}
              <span class="rule"></span>
              ${this.tool("zoomIn", "Zoom in")}${this.tool("zoomOut", "Zoom out")}
              <span class="rule"></span>
              ${this.tool("scroll", "Auto scroll", { on: true })}${this.tool("shift", "Chart shift")}
              <span class="rule"></span>
              ${this.tool("plus", "Indicators", { drop: true })}${this.tool("clock", "Periods", { drop: true })}${this.tool("template", "Templates", { drop: true })}
            </div>
          </div>
          <div class="bar lower">
            <div class="group drawing">
              ${this.tool("cursor", "Cursor", { on: true })}${this.tool("cross", "Crosshair")}
              <span class="rule"></span>
              ${this.tool("vline", "Vertical line")}${this.tool("hline", "Horizontal line")}${this.tool("trend", "Trendline")}
              ${this.tool("channel", "Channel")}${this.tool("fibo", "Fibonacci")}
              <button class="tool letter">A</button>
              <button class="tool"><span class="boxed">T</span></button>
              ${this.tool("arrows", "Arrows", { drop: true })}
            </div>
            <div class="group">
              <span class="grip"></span>
              ${["M1", "M5", "M15", "M30", "H1", "H4", "D1", "W1", "MN"].map(
                (p) => html`<button class=${classMap({ tool: true, period: true, on: p === "M5" })}>${p}</button>`,
              )}
            </div>
          </div>

          <div class="work">
            <div class="dock">
              <section class="panel">
                ${this.title("Market Watch: 16:09:03")}
                <div class="content quotes">
                  <table>
                    <colgroup><col /><col class="num" /><col class="num last" /></colgroup>
                    <thead><tr><th>Symbol</th><th>Bid</th><th>Ask</th></tr></thead>
                    <tbody>
                      ${QUOTES.map(([s, b, a, up]) => html`<tr class=${up ? "up" : "down"}><td>${s}</td><td>${b}</td><td>${a}</td></tr>`)}
                    </tbody>
                  </table>
                  ${this.scrollbar()}
                </div>
                <div class="tabs">
                  <button class="tab active">Symbols</button>
                  <div class="line"><button class="tab">Tick Chart</button><span class="bartick"></span></div>
                </div>
              </section>
              <div class="gap"></div>
              <section class="panel">
                ${this.title("Navigator")}
                <div class="content tree-box">
                  <ul class="tree">
                    ${TREE.map(([lv, icon, text]) => html`<li class="lv${lv}">
                      ${lv === 1 ? html`<i class="box"></i>` : ""}${lv > 0 ? html`<i class="dots"></i>` : ""}${treeIcon(icon)}<span>${text}</span></li>`)}
                  </ul>
                  ${this.scrollbar()}
                </div>
                <div class="tabs">
                  <button class="tab active">Common</button>
                  <div class="line"><button class="tab">Favorites</button><span class="bartick"></span></div>
                </div>
              </section>
            </div>
            <div class="charts">
              <price-chart></price-chart>
              <div class="sheets">
                <button class="tab active">EURUSD,M5</button>
                <div class="line">
                  ${["USDCHF,M5", "GBPUSD,M5", "USDJPY,M5"].map((t) => html`<button class="tab">${t}</button><span class="bartick"></span>`)}
                  <span class="nav"><i class="prev"></i><i class="next"></i></span>
                </div>
              </div>
            </div>
          </div>

          <section class="terminal">
            <table class="orders">
              <colgroup>
                <col class="w-order" /><col /><col class="w-type" /><col class="w-size" /><col class="w-symbol" />
                <col class="w-num" span="6" /><col class="w-profit" />
              </colgroup>
              <thead><tr>${HEAD.map((h, i) => html`<th>${h}${i === 0 ? html`<span class="sort">∕</span>` : ""}</th>`)}</tr></thead>
              <tbody>
                ${ORDERS.map((row) => html`<tr>${row.map((c, i) => html`<td>${i === 0 ? html`<div class="cell">${this.doc()}<span>${c}</span></div>` : c}</td>`)}</tr>`)}
              </tbody>
              <tfoot>
                <tr>
                  <td colspan="11"><div class="cell"><svg viewBox="0 0 15 16" aria-hidden="true"><rect x="1.500" y="2.500" width="10" height="12" fill="#fff" stroke="#666"/><path d="M6.500 4.500l4 4h-2.500v4h-3v-4H2.500z" fill="#2cb52c" stroke="#0a6a0a" stroke-width=".6"/></svg><span>Balance: 3 076.30  Equity: 6 879.69  Margin: 1 248.16  Free margin: 5 631.53  Margin level: 551.19%</span></div></td>
                  <td>3 803.39</td>
                </tr>
              </tfoot>
            </table>
          </section>
        </div>
        <div class="mark red"></div>
        <div class="mark blue"></div>
        <div class="mark green"></div>
      </main>
    `;
  }
}
